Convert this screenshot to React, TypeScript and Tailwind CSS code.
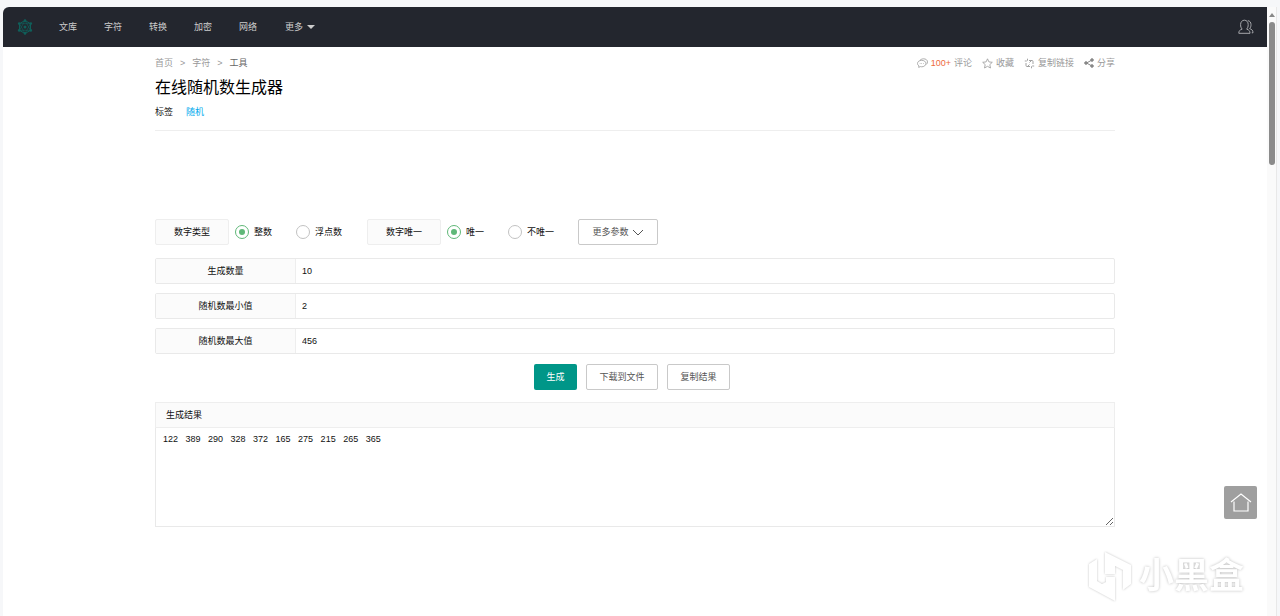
const navLinks = ["文库", "字符", "转换", "加密", "网络"];

const fields = [
  { id: "count", label: "生成数量", value: "10" },
  { id: "min", label: "随机数最小值", value: "2" },
  { id: "max", label: "随机数最大值", value: "456" },
];

const numbers = [122, 389, 290, 328, 372, 165, 275, 215, 265, 365];

function Logo() {
  return (
    <svg className="size-4" viewBox="0 0 16 16" fill="none" stroke="#0f5f5a" aria-hidden="true">
      <path d="M8 1.5 13.5 4.7v6.6L8 14.5 2.5 11.3V4.7z" />
      <path d="M2.5 4.7h11L8 14.5zM2.5 11.3h11L8 1.5z" strokeWidth=".7" />
      <g fill="#0f5f5a" stroke="none">
        <circle cx="8" cy="1.6" r="1.3" />
        <circle cx="13.8" cy="4.6" r="1.3" />
        <circle cx="13.8" cy="11.4" r="1.3" />
        <circle cx="8" cy="14.4" r="1.3" />
        <circle cx="2.2" cy="11.4" r="1.3" />
        <circle cx="2.2" cy="4.6" r="1.3" />
        <circle cx="8" cy="8" r="1.5" />
      </g>
    </svg>
  );
}

function UserIcon() {
  return (
    <svg className="h-4 w-4" viewBox="0 0 16 16" fill="none" stroke="#a5a7ab" aria-hidden="true">
      <path d="M.8 14.300c0-2.300.8-3.300 3.400-4.200C3 9 2.600 7.600 2.600 5.600 2.600 3 4.100 1.200 6.400 1.200s3.800 1.800 3.800 4.400c0 2-.4 3.400-1.600 4.500 2.600.9 3.400 1.900 3.400 4.200z" />
      <path d="M9.800 1.700c2.100.1 3.200 1.700 3.200 3.900 0 1.700-.4 3-1.400 4 2.300.8 3.400 1.700 3.400 4.200h-1.200" />
    </svg>
  );
}

function Toolbar() {
  return (
    <div className="flex items-center gap-2.5 text-[#999]">
      <a href="#comments" className="flex items-center gap-[3px]">
        <svg className="h-[11px] w-[11px]" viewBox="0 0 11 11" fill="none" stroke="#999" strokeWidth=".8" aria-hidden="true">
          <path d="M3 2.300C3.900 1.300 5.200.8 6.600.8c2.200 0 3.900 1.300 3.900 3.100 0 1.100-.5 2-1.400 2.600" />
          <path d="M4.700 2.300c2.300 0 4.200 1.300 4.200 3.200S7 8.800 4.700 8.800c-.5 0-1-.1-1.400-.2l-1.600.8.200-1.500C1 7.300.5 6.500.5 5.500.5 3.600 2.400 2.300 4.700 2.300z" />
          <path d="M2.800 5.500h.6M4.400 5.500H5M6 5.500h.6" />
        </svg>
        <span className="text-[#ee6a3c]">100+</span>
        <span>评论</span>
      </a>
      <a href="#favorite" className="flex items-center gap-[3px]">
        <svg className="h-[11px] w-[11px]" viewBox="0 0 11 11" fill="none" stroke="#999" strokeWidth=".8" strokeLinejoin="round" aria-hidden="true">
          <path d="m5.500.8 1.400 3.100 3.400.4-2.500 2.300.7 3.400-3-1.700-3 1.700.7-3.400L.7 4.300l3.400-.4z" />
        </svg>
        收藏
      </a>
      <a href="#copy-link" className="flex items-center gap-[3px]">
        <svg className="h-[11px] w-[11px]" viewBox="0 0 11 11" fill="none" stroke="#999" strokeWidth=".9" aria-hidden="true">
          <path d="M3.500.7v2M.8 3h2M7.500 10.300v-2M10.200 8h-2M5 2.500h3q1 0 1 1V6M2 5v2.500q0 1 1 1h3M5.500 4.500l2-2M3.500 8.500l2-2" />
        </svg>
        复制链接
      </a>
      <a href="#share" className="flex items-center gap-[3px]">
        <svg className="h-[10px] w-[10px]" viewBox="0 0 10 10" fill="#888" stroke="#888" aria-hidden="true">
          <path d="M8 2 2.500 5 8 8" fill="none" />
          <circle cx="8" cy="2" r="1.300" />
          <circle cx="2" cy="5" r="1.300" />
          <circle cx="8" cy="8" r="1.300" />
        </svg>
        分享
      </a>
    </div>
  );
}

type RadioProps = { name: string; label: string; defaultChecked?: boolean };

function Radio({ name, label, defaultChecked }: RadioProps) {
  return (
    <label className="flex items-center gap-[5px] pr-[18px] pl-1.5">
      <input
        type="radio"
        name={name}
        defaultChecked={defaultChecked}
        className="size-3.5 appearance-none rounded-full border border-[#c2c2c2] bg-white bg-clip-content p-[3px] checked:border-[#5fb878] checked:bg-[#5fb878]"
      />
      {label}
    </label>
  );
}

function GroupTitle({ children }: { children: string }) {
  return (
    <span className="flex h-[26px] w-[74px] items-center justify-center rounded-xs border border-[#eee] bg-[#fbfbfb]">
      {children}
    </span>
  );
}

function Watermark() {
  return (
    <div className="fixed right-9 bottom-3.5 flex items-center gap-1.5 select-none">
      <svg className="h-[52px] w-[46px] drop-shadow-[0_0_1px_#c4c4c4]" viewBox="0 0 46 52" fill="#fff" aria-hidden="true">
        <path d="M2 14 10 9v22l5 3 4-2v-5h9v24L2 37z" />
        <path d="M18 2 44 15v19l-8 6V20l-8-4v8H18z" />
      </svg>
      <span className="text-[35px] leading-[52px] font-bold text-white [text-shadow:0_0_3px_#bbb]">小黑盒</span>
    </div>
  );
}

export default function App() {
  return (
    <div className="min-h-screen bg-[#f6f7f9] pt-[7px] pr-[3px] pl-[3px] font-['Liberation_Sans','Noto_Sans_CJK_SC',sans-serif] text-[9px] leading-4 text-[#111]">
      <div className="flex min-h-[calc(100vh-7px)] rounded-tl-md bg-white">
        <div className="min-w-0 flex-1">
          <header className="flex h-10 items-center rounded-tl-md bg-[#23262e] pr-[13px] pl-3.5 text-[#ccc]">
            <a href="#home" aria-label="首页">
              <Logo />
            </a>
            <nav className="ml-3 flex flex-1">
              {navLinks.map((name) => (
                <a key={name} href="#nav" className="pr-[13px] pl-3.5">
                  {name}
                </a>
              ))}
              <button className="flex items-center gap-1 px-[15px]">
                更多
                <span className="border-x-4 border-t-4 border-x-transparent border-t-[#ccc]" />
              </button>
            </nav>
            <button aria-label="用户">
              <UserIcon />
            </button>
          </header>

          <main className="mx-auto w-full max-w-[960px]">
            <div className="flex h-8 items-center justify-between">
              <nav className="flex gap-[7px] text-[#999]">
                <a href="#home">首页</a>
                <span>&gt;</span>
                <a href="#chars">字符</a>
                <span>&gt;</span>
                <span className="text-[#666]">工具</span>
              </nav>
              <Toolbar />
            </div>
            <h1 className="text-base leading-[18px] text-black">在线随机数生成器</h1>
            <div className="flex h-[34px] gap-[13px] border-b border-[#eee] pt-[7px]">
              <span>标签</span>
              <a href="#random" className="text-[#01aaed]">
                随机
              </a>
            </div>

            <form className="mt-22" onSubmit={(e) => e.preventDefault()}>
              <div className="flex items-center">
                <GroupTitle>数字类型</GroupTitle>
                <Radio name="type" label="整数" defaultChecked />
                <Radio name="type" label="浮点数" />
                <div className="ml-[7px]">
                  <GroupTitle>数字唯一</GroupTitle>
                </div>
                <Radio name="unique" label="唯一" defaultChecked />
                <Radio name="unique" label="不唯一" />
                <button
                  type="button"
                  className="ml-1.5 flex h-[26px] w-20 items-center justify-center gap-[3px] rounded-xs border border-[#c9c9c9] text-[#555]"
                >
                  更多参数
                  <svg className="h-[7px] w-3" viewBox="0 0 12 7" fill="none" stroke="#555" aria-hidden="true">
                    <path d="m1 1 5 5 5-5" />
                  </svg>
                </button>
              </div>

              <div className="mt-[13px] flex flex-col gap-[9px]">
                {fields.map((field) => (
                  <div key={field.id} className="flex h-[26px] rounded-xs border border-[#e9e9e9]">
                    <label
                      htmlFor={field.id}
                      className="flex w-[140px] items-center justify-center border-r border-[#eee] bg-[#fbfbfb]"
                    >
                      {field.label}
                    </label>
                    <input
                      id={field.id}
                      type="text"
                      defaultValue={field.value}
                      className="min-w-0 flex-1 px-1.5 outline-none"
                    />
                  </div>
                ))}
              </div>

              <div className="mt-2.5 flex justify-center gap-[9px] pr-1.5 text-[#555]">
                <button type="submit" className="h-[26px] w-[43px] rounded-xs bg-[#009688] text-white">
                  生成
                </button>
                <button type="button" className="h-[26px] w-[72px] rounded-xs border border-[#c9c9c9]">
                  下载到文件
                </button>
                <button type="button" className="h-[26px] w-[63px] rounded-xs border border-[#c9c9c9]">
                  复制结果
                </button>
              </div>

              <div className="mt-3">
                <label
                  htmlFor="result"
                  className="flex h-[26px] items-center border border-[#eee] bg-[#fbfbfb] px-2.5"
                >
                  生成结果
                </label>
                <textarea
                  id="result"
                  defaultValue={numbers.join("   ")}
                  className="block h-[99px] w-full resize-y border border-t-0 border-[#e9e9e9] px-[7px] py-[3px] outline-none"
                />
              </div>
            </form>
          </main>
        </div>

        {/* Scroll track */}
        <div className="flex w-2.5 flex-col items-center border-r border-[#e8e8e8] bg-[#fafafa] pt-1.5">
          <span className="border-x-3 border-b-4 border-x-transparent border-b-[#888]" />
          <span className="mt-[5px] h-[143px] w-1.5 rounded-full bg-[#8b8b8b]" />
        </div>
      </div>

      <a
        href="#top"
        aria-label="返回顶部"
        className="fixed right-[23px] bottom-[97px] flex size-[33px] items-center justify-center rounded-xs bg-[#9f9f9f]"
      >
        <svg className="size-[22px]" viewBox="0 0 22 22" fill="none" stroke="#fff" strokeWidth="1.2" aria-hidden="true">
          <path d="M1 10 11 2l10 8M4 9.500V19h14V9.500" />
        </svg>
      </a>
      <Watermark />
    </div>
  );
}
